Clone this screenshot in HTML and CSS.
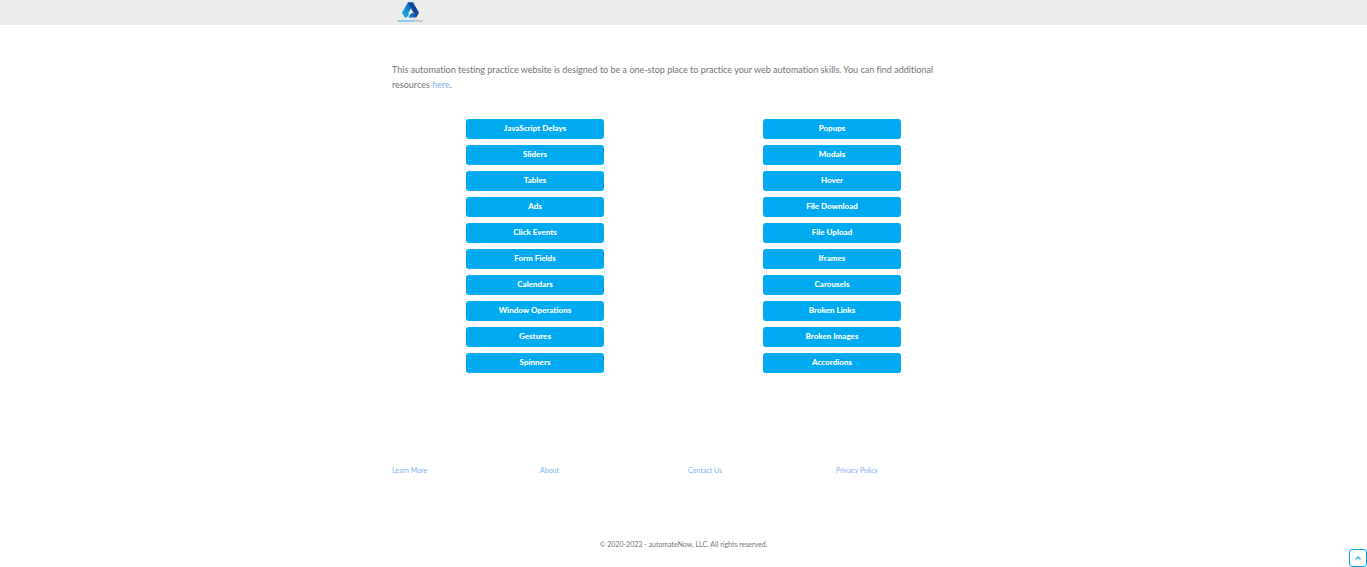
FILE: index.html
```html
<!DOCTYPE html>
<html lang="en">
<head>
<meta charset="utf-8">
<meta name="viewport" content="width=device-width, initial-scale=1">
<title>automateNow Practice</title>
<link rel="stylesheet" href="styles.css">
</head>
<body>
<header class="site-header">
  <div class="container">
    <a class="logo" href="#" aria-label="automateNow">
      <svg class="logo-mark" viewBox="0 0 32 30" aria-hidden="true">
        <defs>
          <linearGradient id="leg" x1="1" y1="0" x2="0" y2="1">
            <stop offset="0" stop-color="#0a58a8"/>
            <stop offset="1" stop-color="#1cb4f0"/>
          </linearGradient>
          <linearGradient id="bar" x1="0" y1="0" x2="1" y2="0">
            <stop offset="0" stop-color="#1586d2"/>
            <stop offset="1" stop-color="#123a86"/>
          </linearGradient>
        </defs>
        <path d="M11 1h10l-1 6-9 15h3l-5 7H5L0 20z" fill="url(#leg)"/>
        <path d="M11 1h10l11 19-4 4-6-3-7-13z" fill="#0d4796"/>
        <path d="M17 21h14l1-1-5 9H12z" fill="url(#bar)"/>
      </svg>
      <span class="logo-text">automate<span class="logo-now">Now</span></span>
    </a>
  </div>
</header>
<main class="container content">
  <p class="intro">This automation testing practice website is designed to be a one-stop place to practice your web automation skills. You can find additional resources <a href="#">here</a>.</p>
  <div class="topics">
    <div class="topic-list">
      <a class="button" href="#">JavaScript Delays</a>
      <a class="button" href="#">Sliders</a>
      <a class="button" href="#">Tables</a>
      <a class="button" href="#">Ads</a>
      <a class="button" href="#">Click Events</a>
      <a class="button" href="#">Form Fields</a>
      <a class="button" href="#">Calendars</a>
      <a class="button" href="#">Window Operations</a>
      <a class="button" href="#">Gestures</a>
      <a class="button" href="#">Spinners</a>
    </div>
    <div class="topic-list">
      <a class="button" href="#">Popups</a>
      <a class="button" href="#">Modals</a>
      <a class="button" href="#">Hover</a>
      <a class="button" href="#">File Download</a>
      <a class="button" href="#">File Upload</a>
      <a class="button" href="#">Iframes</a>
      <a class="button" href="#">Carousels</a>
      <a class="button" href="#">Broken Links</a>
      <a class="button" href="#">Broken Images</a>
      <a class="button" href="#">Accordions</a>
    </div>
  </div>
</main>
<footer class="container">
  <nav class="footer-links" aria-label="Footer">
    <a href="#">Learn More</a>
    <a href="#">About</a>
    <a href="#">Contact Us</a>
    <a href="#">Privacy Policy</a>
  </nav>
  <p class="copyright">© 2020-2023 - automateNow, LLC. All rights reserved.</p>
</footer>
<button class="to-top" type="button" aria-label="Back to top">
  <svg viewBox="0 0 8 6" aria-hidden="true"><path d="M1.500 4.500L4 2l2.500 2.500" fill="none" stroke="#2cb4ee" stroke-width="1.300"/></svg>
</button>
</body>
</html>
```
FILE: styles.css
```css
* {
  box-sizing: border-box;
}

body {
  margin: 0;
  background: #fff;
  color: #757575;
  font-family: Lato, "Open Sans", sans-serif;
  font-size: 9px;
  line-height: 15px;
}

a {
  color: #7fb0ea;
  text-decoration: none;
}

.container {
  width: 100%;
  max-width: 583px;
  margin: 0 auto;
}

.site-header {
  background: #ebebeb;
}

.logo {
  display: flex;
  flex-direction: column;
  align-items: center;
  width: 36px;
  padding: 2px 0;
}

.logo-mark {
  width: 17px;
  height: 16px;
}

.logo-text {
  color: #3fb8ea;
  font-size: 4px;
  font-weight: 900;
  line-height: 5px;
}

.logo-now {
  color: #a4a9b2;
  font-weight: 400;
}

.content {
  padding-top: 37px;
}

.intro {
  margin: 0 0 27px;
  padding-right: 16px;
  font-variant-ligatures: none;
}

.topics {
  display: grid;
  grid-template-columns: 1fr 1fr;
  gap: 11px;
}

.topic-list {
  display: flex;
  flex-direction: column;
  align-items: center;
  gap: 6px;
}

.button {
  width: 138px;
  padding: 2px 4px 3px;
  border-radius: 3px;
  background: #00aaf0;
  color: #fff;
  font-size: 8px;
  font-weight: 900;
  text-align: center;
}

.footer-links {
  display: grid;
  grid-template-columns: repeat(4, 1fr);
  gap: 9px;
  padding-top: 90px;
  font-size: 7px;
}

.copyright {
  margin: 0;
  padding: 59px 0 15px;
  font-size: 7px;
  text-align: center;
}

.to-top {
  position: fixed;
  right: 0;
  bottom: 0;
  display: flex;
  align-items: center;
  justify-content: center;
  width: 18px;
  height: 18px;
  padding: 0;
  border: 1px solid #00aaf0;
  border-radius: 3px;
  background: #fff;
}

.to-top svg {
  width: 8px;
  height: 6px;
}
```
